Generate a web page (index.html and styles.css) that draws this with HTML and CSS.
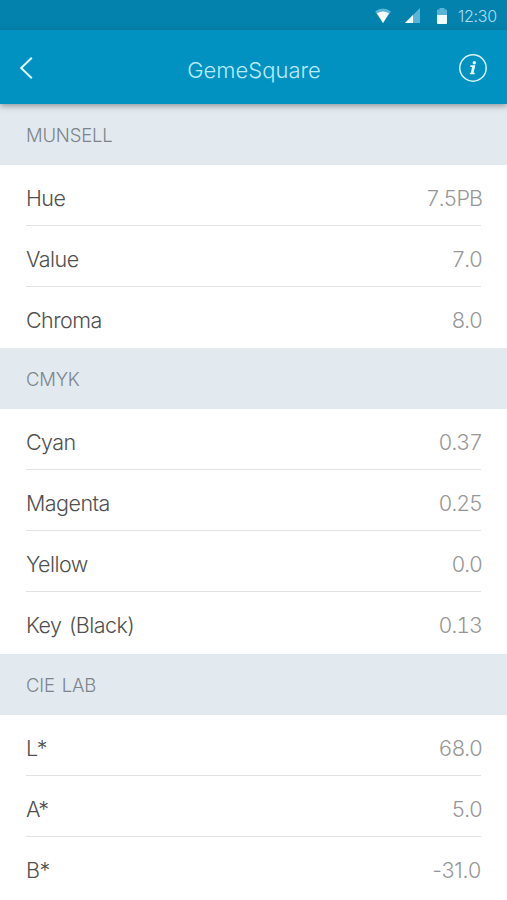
FILE: index.html
```html
<!DOCTYPE html>
<html lang="en">
<head>
<meta charset="utf-8">
<title>GemeSquare</title>
<link rel="stylesheet" href="styles.css">
</head>
<body>
<div class="status">
  <svg class="wifi" width="18" height="16" viewBox="0 0 18 16"><path d="M1 3.5Q9-2.5 17 3.5L9 15Z" fill="#5bb4d3"/><path d="M3 5.2Q9 1.8 15 5.2L9 15Z" fill="#fff"/></svg>
  <svg class="signal" width="15" height="15" viewBox="0 0 15 15"><path d="M0 15L15 0V15Z" fill="#5bb4d3"/><path d="M0 15L8 7V15Z" fill="#f4fdff"/></svg>
  <svg class="battery" width="10" height="16" viewBox="0 0 10 16"><path d="M0 7V2.5Q0 1.5 1 1.5H2.5V0H7.500V1.500H9Q10 1.500 10 2.500V7Z" fill="#5bb4d3"/><path d="M0 7H10V15Q10 16 9 16H1Q0 16 0 15Z" fill="#f4fdff"/></svg>
  <span class="time">12:30</span>
</div>
<header class="bar">
  <svg class="back" width="14" height="24" viewBox="0 0 14 24"><path d="M12.800 1.700L2.200 12L12.800 22.300" fill="none" stroke="#e2fbff" stroke-width="2"/></svg>
  <h1 class="title">GemeSquare</h1>
  <svg class="info" width="30" height="30" viewBox="0 0 30 30"><circle cx="15" cy="15" r="13.200" fill="none" stroke="#d8f5fd" stroke-width="1.500"/><circle cx="16.300" cy="9.700" r="1.700" fill="#e8fbff"/><path d="M12.300 13.100H16.300L14.500 20.500H16.700M11.900 20.500H14.500" fill="none" stroke="#e8fbff" stroke-width="1.600"/><path d="M15.500 13L14 20.500" stroke="#e8fbff" stroke-width="2.400"/></svg>
</header>
<main>
  <section>
    <h2 class="head">MUNSELL</h2>
    <div class="row"><span class="name">Hue</span><span class="value">7.5PB</span></div>
    <div class="row"><span class="name">Value</span><span class="value">7.0</span></div>
    <div class="row"><span class="name">Chroma</span><span class="value">8.0</span></div>
  </section>
  <section>
    <h2 class="head">CMYK</h2>
    <div class="row"><span class="name">Cyan</span><span class="value">0.37</span></div>
    <div class="row"><span class="name">Magenta</span><span class="value">0.25</span></div>
    <div class="row"><span class="name">Yellow</span><span class="value">0.0</span></div>
    <div class="row tall"><span class="name">Key (Black)</span><span class="value">0.13</span></div>
  </section>
  <section>
    <h2 class="head">CIE LAB</h2>
    <div class="row"><span class="name">L*</span><span class="value">68.0</span></div>
    <div class="row"><span class="name">A*</span><span class="value">5.0</span></div>
    <div class="row"><span class="name">B*</span><span class="value negative">-31.0</span></div>
  </section>
</main>
</body>
</html>
```
FILE: styles.css
```css
* { box-sizing: border-box; }
body {
  margin: 0;
  height: 900px;
  overflow: hidden;
  background: #fff;
  font-family: Inter, "Liberation Sans", sans-serif;
  font-weight: 300;
}
svg { display: block; flex: none; }
h1, h2 { margin: 0; font-weight: 300; }
.status {
  display: flex;
  align-items: center;
  justify-content: flex-end;
  height: 30px;
  padding: 1px 10px 0 0;
  background: #0382ae;
}
.wifi { margin-right: 13px; }
.signal { margin-right: 17px; }
.battery { margin-right: 11px; }
.time {
  width: 39px;
  font-size: 16px;
  letter-spacing: -0.3px;
  white-space: nowrap;
  color: #a9dff0;
}
.bar {
  position: relative;
  display: flex;
  align-items: center;
  justify-content: space-between;
  height: 74px;
  padding: 2px 19px 0;
  background: #0192c1;
  box-shadow: 0 2px 6px rgba(60, 70, 75, .5);
}
.back { margin-right: 17px; }
.title {
  padding-top: 3px;
  font-size: 22px;
  line-height: 30px;
  color: #b9ecfa;
}
.head {
  display: flex;
  align-items: center;
  height: 61px;
  padding: 0 26px;
  font-size: 18.500px;
  letter-spacing: -0.2px;
  word-spacing: 2px;
  color: #7d858a;
  background: #e2eaf0;
}
.row {
  display: flex;
  align-items: center;
  justify-content: space-between;
  height: 61px;
  margin: 0 26px;
  padding-top: 5px;
  border-bottom: 1px solid #e3e3e3;
  font-size: 21.500px;
}
.tall { height: 62px; }
.row:last-child { border-bottom-color: transparent; }
.name {
  color: #505050;
  letter-spacing: -0.55px;
  word-spacing: 2px;
}
.value {
  margin-right: -1px;
  color: #979797;
  font-variant-numeric: tabular-nums;
  letter-spacing: -1px;
}
.negative {
  margin-right: 0;
  font-variant-numeric: normal;
  letter-spacing: -0.2px;
}
```
